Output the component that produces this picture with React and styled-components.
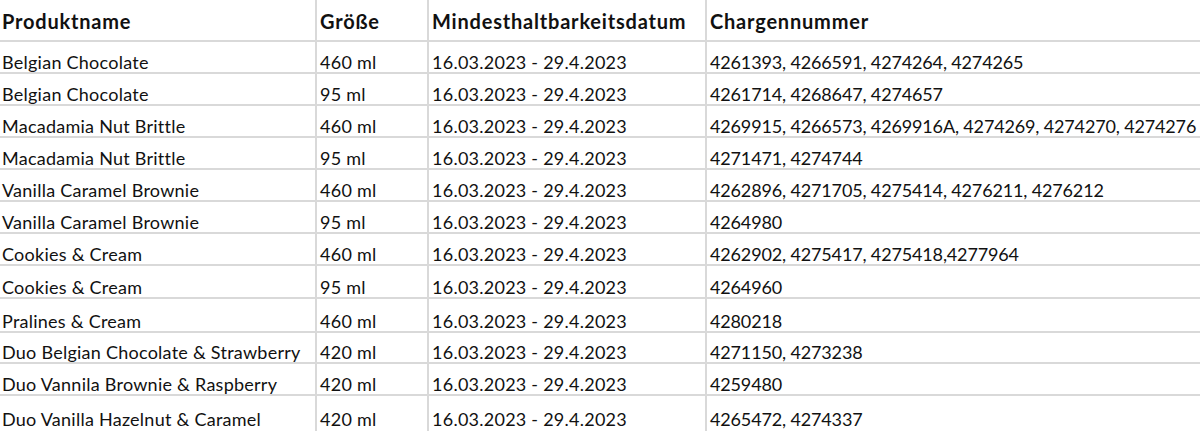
import React from 'react';
import styled, { createGlobalStyle } from 'styled-components';

const GlobalStyle = createGlobalStyle`
  html, body {
    margin: 0;
    padding: 0;
    background: #ffffff;
  }
  body {
    font-family: Lato, "Liberation Sans", sans-serif;
    color: #111111;
  }
`;

const rows = [
  ['Belgian Chocolate', '460 ml', '16.03.2023 - 29.4.2023', '4261393, 4266591, 4274264, 4274265', 32],
  ['Belgian Chocolate', '95 ml', '16.03.2023 - 29.4.2023', '4261714, 4268647, 4274657', 32],
  ['Macadamia Nut Brittle', '460 ml', '16.03.2023 - 29.4.2023', '4269915, 4266573, 4269916A, 4274269, 4274270, 4274276', 32],
  ['Macadamia Nut Brittle', '95 ml', '16.03.2023 - 29.4.2023', '4271471, 4274744', 32],
  ['Vanilla Caramel Brownie', '460 ml', '16.03.2023 - 29.4.2023', '4262896, 4271705, 4275414, 4276211, 4276212', 32],
  ['Vanilla Caramel Brownie', '95 ml', '16.03.2023 - 29.4.2023', '4264980', 32],
  ['Cookies & Cream', '460 ml', '16.03.2023 - 29.4.2023', '4262902, 4275417, 4275418,4277964', 32],
  ['Cookies & Cream', '95 ml', '16.03.2023 - 29.4.2023', '4264960', 33],
  ['Pralines & Cream', '460 ml', '16.03.2023 - 29.4.2023', '4280218', 34],
  ['Duo Belgian Chocolate & Strawberry', '420 ml', '16.03.2023 - 29.4.2023', '4271150, 4273238', 31],
  ['Duo Vannila Brownie & Raspberry', '420 ml', '16.03.2023 - 29.4.2023', '4259480', 32],
  ['Duo Vanilla Hazelnut & Caramel', '420 ml', '16.03.2023 - 29.4.2023', '4265472, 4274337', 40],
];

const Sheet = styled.table`
  width: 1200px;
  table-layout: fixed;
  border-collapse: separate;
  border-spacing: 0;
`;

const Col = styled.col`
  width: ${(p) => p.$w}px;
`;

const Row = styled.tr`
  height: ${(p) => p.$h}px;

  td {
    padding-bottom: ${(p) => (p.$tail ? '5px' : '0')};
  }
`;

const HeadCell = styled.th`
  box-sizing: border-box;
  padding: 0 0 7px 3px;
  text-align: left;
  vertical-align: bottom;
  font-size: 20px;
  font-weight: 700;
  letter-spacing: 0.8px;
  line-height: 24px;
  white-space: nowrap;
  border-bottom: 2px solid #d9d9d9;
  border-right: ${(p) => (p.$last ? 'none' : '2px solid #d9d9d9')};
  &:first-child {
    padding-left: 2px;
  }
`;

const Cell = styled.td`
  box-sizing: border-box;
  padding-top: 0;
  padding-right: 0;
  padding-left: 3px;
  vertical-align: bottom;
  font-size: 18px;
  letter-spacing: ${(p) => (p.$num ? '-0.15px' : '0.25px')};
  line-height: 20px;
  white-space: nowrap;
  overflow: visible;
  border-bottom: 2px solid #d9d9d9;
  border-right: ${(p) => (p.$num ? 'none' : '2px solid #d9d9d9')};
  &:first-child {
    padding-left: 2px;
  }
`;

export default function App() {
  return (
    <>
      <GlobalStyle />
      <Sheet>
        <colgroup>
          <Col $w={317} />
          <Col $w={112} />
          <Col $w={278} />
          <Col $w={493} />
        </colgroup>
        <thead>
          <Row $h={42}>
            <HeadCell>Produktname</HeadCell>
            <HeadCell>Größe</HeadCell>
            <HeadCell>Mindesthaltbarkeitsdatum</HeadCell>
            <HeadCell $last>Chargennummer</HeadCell>
          </Row>
        </thead>
        <tbody>
          {rows.map(([name, size, date, batch, h], i) => (
            <Row key={i} $h={h} $tail={i === rows.length - 1}>
              <Cell>{name}</Cell>
              <Cell>{size}</Cell>
              <Cell>{date}</Cell>
              <Cell $num>{batch}</Cell>
            </Row>
          ))}
        </tbody>
      </Sheet>
    </>
  );
}
